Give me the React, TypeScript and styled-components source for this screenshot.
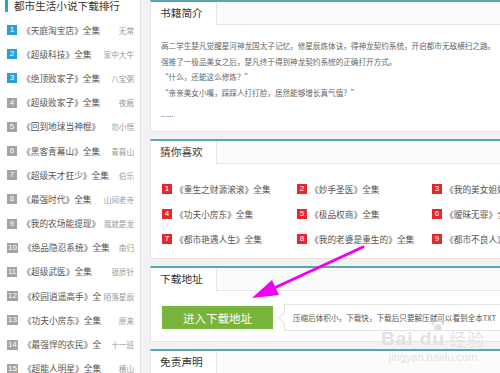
import styled, { createGlobalStyle } from "styled-components";

const GlobalStyle = createGlobalStyle`
    html, body {
        margin: 0;
        padding: 0;
        background: #f2f2f2;
    }
    * {
        box-sizing: border-box;
    }
`;

const Page = styled.div`
    position: relative;
    width: 500px;
    height: 373px;
    overflow: hidden;
    display: flex;
    background: #f2f2f2;
    font-family: "Noto Sans CJK SC", "Noto Sans", sans-serif;
`;

const Sidebar = styled.aside`
    width: 141px;
    flex-shrink: 0;
    background: #fff;
    border-right: 1px solid #e2e2e2;
    overflow: hidden;
`;

const SidebarInner = styled.div`
    margin-top: -8px;
`;

const SidebarTitle = styled.h3`
    display: flex;
    align-items: center;
    height: 26px;
    margin: 0;
    padding-left: 5px;
    font-size: 10.6px;
    font-weight: normal;
    color: #333;
    white-space: nowrap;

    &::before {
        content: "";
        width: 3px;
        height: 14px;
        margin-right: 6px;
        background: #2b9fd8;
    }
`;

const RankRow = styled.div`
    display: flex;
    align-items: center;
    height: 24.2px;
    padding: 0 6px 0 7px;
    white-space: nowrap;
`;

const Badge = styled.span<{ $color: string }>`
    flex-shrink: 0;
    min-width: 10px;
    height: 10px;
    padding: 0 1px;
    background: ${(p) => p.$color};
    color: #fff;
    font-family: "Liberation Sans", Arial, sans-serif;
    font-size: 8px;
    line-height: 10px;
    text-align: center;
`;

const RankName = styled.span`
    margin-left: 5px;
    flex: 1;
    overflow: hidden;
    font-size: 8.7px;
    color: #555;
`;

const RankAuthor = styled.span`
    margin-left: 3px;
    font-size: 7.6px;
    color: #999;
`;

const MainColumn = styled.main`
    width: 400px;
    flex-shrink: 0;
    margin-left: 9px;
    display: flex;
    flex-direction: column;
    gap: 7px;
`;

const Panel = styled.section`
    flex-shrink: 0;
    background: #fff;
    border: 1px solid #e3e3e3;
    border-top: 2px solid #56a8b4;
`;

const PanelHeader = styled.header`
    display: flex;
    height: 23px;
    background: #fbfbfb;
    border-bottom: 1px solid #e6e6e6;
`;

const Tab = styled.h4`
    width: 66px;
    height: 23px;
    margin: 0;
    padding-left: 9px;
    background: #fff;
    border-right: 1px solid #e6e6e6;
    font-size: 10.7px;
    font-weight: normal;
    line-height: 22px;
    color: #333;
`;

const Intro = styled.div`
    padding: 13px 10px 9.5px 10px;
`;

const IntroLine = styled.p<{ $gap?: number }>`
    margin: ${(p) => p.$gap || 0}px 0 0;
    font-size: 7.6px;
    line-height: 15.5px;
    color: #666;
    white-space: nowrap;
`;

const GuessGrid = styled.div`
    display: grid;
    grid-template-columns: repeat(3, 135px);
    grid-auto-rows: 25px;
    padding: 12.5px 11px 6.5px 11px;
`;

const GuessItem = styled.div`
    display: flex;
    align-items: center;
    white-space: nowrap;
`;

const GuessName = styled.span`
    margin-left: 3px;
    font-size: 8.7px;
    color: #555;
`;

const DownloadBody = styled.div`
    display: flex;
    align-items: center;
    padding: 13px 11px 10px 11px;
`;

const DownloadButton = styled.button`
    width: 111px;
    height: 23px;
    flex-shrink: 0;
    border: none;
    background: #79b43b;
    color: #fff;
    font-family: inherit;
    font-size: 11.5px;
    cursor: pointer;
`;

const Note = styled.div`
    position: relative;
    display: flex;
    align-items: center;
    height: 27px;
    margin-left: 11px;
    padding-left: 8px;
    border: 1px solid #e3e3e3;
    flex: 1;
    font-size: 7.6px;
    color: #555;
    white-space: nowrap;

    &::before {
        content: "";
        position: absolute;
        left: -5px;
        top: 9px;
        width: 7px;
        height: 7px;
        background: #fff;
        border-left: 1px solid #e3e3e3;
        border-bottom: 1px solid #e3e3e3;
        transform: rotate(45deg);
    }
`;

const Filler = styled.div`
    height: 40px;
`;

const Overlay = styled.svg`
    position: absolute;
    left: 0;
    top: 0;
    pointer-events: none;
`;

const Watermark = styled.div`
    position: absolute;
    left: 381px;
    top: 318px;
    display: flex;
    flex-direction: column;
    align-items: center;
    color: rgba(200, 200, 200, 0.55);
    text-shadow: 0 0 1px #fff;
    pointer-events: none;
`;

const WatermarkBrand = styled.div`
    display: flex;
    align-items: flex-end;
    font-family: "Liberation Sans", Arial, sans-serif;
    font-size: 19px;
    font-weight: bold;
    line-height: 20px;
    letter-spacing: 1px;
`;

const WatermarkCn = styled.span`
    margin-left: 4px;
    font-family: "Noto Sans CJK SC", sans-serif;
    font-size: 17px;
    font-weight: normal;
`;

const WatermarkUrl = styled.div`
    margin-top: 2px;
    font-family: "Liberation Sans", Arial, sans-serif;
    font-size: 11px;
    line-height: 12px;
`;

const ranks = [
    ["《天庭淘宝店》全集", "无常"],
    ["《超级科技》全集", "家中大牛"],
    ["《绝顶败家子》全集", "八宝粥"],
    ["《超级败家子》全集", "夜痕"],
    ["《回到地球当神棍》", "勿小悟"],
    ["《黑客青幕山》全集", "青暮山"],
    ["《超级天才狂少》全集", "伯乐"],
    ["《最强时代》全集", "山间老寺"],
    ["《我的农场能提现》", "我就是龙"],
    ["《绝品隐忍系统》全集", "南归"],
    ["《超级武医》全集", "银质针"],
    ["《校园逍遥高手》全", "陌落星辰"],
    ["《功夫小房东》全集", "原来"],
    ["《最强悍的农民》全", "十一班"],
    ["《超能人明星》全集", "横山"],
];

const guesses = [
    "《重生之财源滚滚》全集",
    "《妙手圣医》全集",
    "《我的美女姐姐》全集",
    "《功夫小房东》全集",
    "《极品权商》全集",
    "《暧昧无罪》全集",
    "《都市艳遇人生》全集",
    "《我的老婆是重生的》全集",
    "《都市不良人》全集",
];

export default function App() {
    return (
        <>
            <GlobalStyle />
            <Page>
                <Sidebar>
                    <SidebarInner>
                        <SidebarTitle>都市生活小说下载排行</SidebarTitle>
                        {ranks.map(([name, author], i) => (
                            <RankRow key={i}>
                                <Badge $color={i < 3 ? "#2b9fd8" : "#a3a3a3"}>{i + 1}</Badge>
                                <RankName>{name}</RankName>
                                <RankAuthor>{author}</RankAuthor>
                            </RankRow>
                        ))}
                    </SidebarInner>
                </Sidebar>

                <MainColumn>
                    <Panel>
                        <PanelHeader>
                            <Tab>书籍简介</Tab>
                        </PanelHeader>
                        <Intro>
                            <IntroLine>高二学生楚凡觉醒星河神龙国太子记忆，修星辰炼体诀，得神龙契约系统，开启都市无敌横扫之路。</IntroLine>
                            <IntroLine>强推了一极品美女之后，楚凡终于得到神龙契约系统的正确打开方式。</IntroLine>
                            <IntroLine>“什么，还能这么修炼？”</IntroLine>
                            <IntroLine>“亲亲美女小嘴，踩踩人打打脸，居然能够增长真气值？”</IntroLine>
                            <IntroLine $gap={6}>......</IntroLine>
                        </Intro>
                    </Panel>

                    <Panel>
                        <PanelHeader>
                            <Tab>猜你喜欢</Tab>
                        </PanelHeader>
                        <GuessGrid>
                            {guesses.map((name, i) => (
                                <GuessItem key={i}>
                                    <Badge $color="#e8262d">{i + 1}</Badge>
                                    <GuessName>{name}</GuessName>
                                </GuessItem>
                            ))}
                        </GuessGrid>
                    </Panel>

                    <Panel>
                        <PanelHeader>
                            <Tab>下载地址</Tab>
                        </PanelHeader>
                        <DownloadBody>
                            <DownloadButton>进入下载地址</DownloadButton>
                            <Note>压缩后体积小，下载快，下载后只要解压就可以看到全本TXT</Note>
                        </DownloadBody>
                    </Panel>

                    <Panel>
                        <PanelHeader>
                            <Tab>免责声明</Tab>
                        </PanelHeader>
                        <Filler />
                    </Panel>
                </MainColumn>

                <Watermark>
                    <svg width="16" height="13" viewBox="0 0 16 13" style={{ marginBottom: -2, marginLeft: 10 }}>
                        <g fill="rgba(200,200,200,0.55)">
                            <ellipse cx="3" cy="5" rx="1.8" ry="2.3" />
                            <ellipse cx="6.3" cy="2" rx="1.8" ry="2" />
                            <ellipse cx="9.9" cy="2" rx="1.8" ry="2" />
                            <ellipse cx="13" cy="5" rx="1.8" ry="2.3" />
                            <path d="M8 6 C5 6 3.5 9.5 4.5 11.5 C5.5 13 7 12 8 12 C9 12 10.5 13 11.5 11.5 C12.5 9.5 11 6 8 6 Z" />
                        </g>
                    </svg>
                    <WatermarkBrand>
                        Bai du<WatermarkCn>经验</WatermarkCn>
                    </WatermarkBrand>
                    <WatermarkUrl>jingyan.baidu.com</WatermarkUrl>
                </Watermark>

                <Overlay width="500" height="373" viewBox="0 0 500 373">
                    <line x1="363" y1="247" x2="272" y2="289" stroke="#f000f0" strokeWidth="3" strokeLinecap="round" />
                    <polygon points="252,298 272,280 279,295" fill="#f000f0" />
                </Overlay>
            </Page>
        </>
    );
}
